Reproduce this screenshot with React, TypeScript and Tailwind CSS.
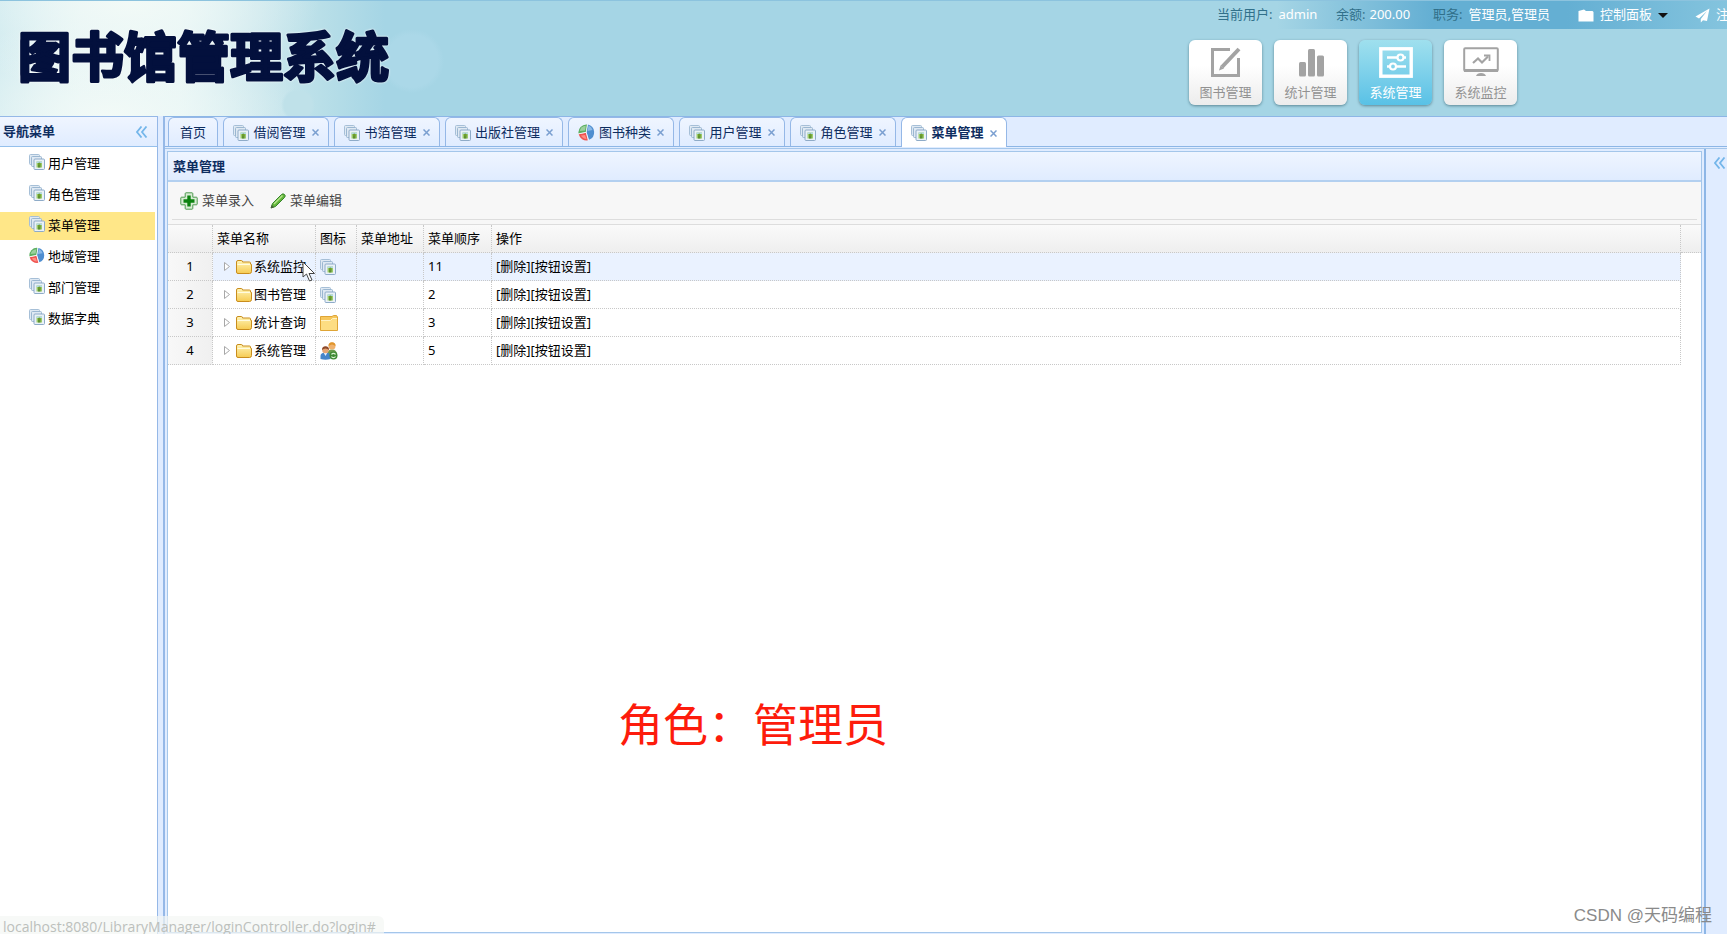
import React, { useState } from 'react'

type IconProps = { className?: string }

type IconType = (props: IconProps) => React.ReactElement

type Tab = {
	title: string
	icon?: IconType
	width: string
}

type MenuRow = {
	name: string
	icon: IconType
	url: string
	order: number
}

function IconPictures({ className = '' }: IconProps) {
	return (
		<svg viewBox="0 0 16 16" className={`size-4 shrink-0 ${className}`} aria-hidden="true">
			<rect x="0.5" y="0.5" width="10" height="10" rx="1" fill="#dfe9f3" stroke="#a6bfd7" />
			<rect x="2.5" y="2.5" width="10" height="10" rx="1" fill="#dfe9f3" stroke="#9bb7d1" />
			<rect x="5" y="5" width="10.5" height="10.5" rx="1" fill="#eaf1f8" stroke="#8eabc8" />
			<rect x="7.500" y="7.500" width="5.500" height="6" fill="#9ccb6a" />
			<rect x="7.500" y="7.500" width="5.500" height="1.500" fill="#b5d9ec" />
			<path d="M9 10.500h2.500v3H9z" fill="#5d8f35" />
			<circle cx="10.300" cy="10" r="1.500" fill="#6c9d2c" />
		</svg>
	)
}

function IconPie({ className = '' }: IconProps) {
	return (
		<svg viewBox="0 0 17 17" className={`size-[17px] shrink-0 ${className}`} aria-hidden="true">
			<path d="M8.500 8L9.800 0.500A8 8 0 0 1 11 15.800Z" fill="#4f8ed0" />
			<path d="M9.500 7L10.500 1.500A6.500 6.500 0 0 1 14.500 6Z" fill="#8bb9e6" />
			<path d="M8 8L0.500 9.500A8 8 0 0 1 9 0.400Z" fill="#5caf62" />
			<path d="M7 6.500L1.800 7A6.500 6.500 0 0 1 7.800 1.800Z" fill="#9bd09d" />
			<path d="M8 8.800L10 16.300A8 8 0 0 1 0.700 10.300Z" fill="#ef5350" />
			<path d="M7 11L8.500 15A6.500 6.500 0 0 1 3 11.500Z" fill="#ff8d84" />
			<path d="M0.500 9.800L8.200 8.300L10.300 16.300M8.200 8.300L9.500 0.500" fill="none" stroke="#fff" strokeWidth="0.600" />
		</svg>
	)
}

function IconFolder({ className = '' }: IconProps) {
	return (
		<svg viewBox="0 0 16 14" className={`h-[14px] w-4 shrink-0 ${className}`} aria-hidden="true">
			<defs>
				<linearGradient id="folder" x1="0" y1="0" x2="0" y2="1">
					<stop offset="0" stopColor="#fff5b8" />
					<stop offset="1" stopColor="#f6cb52" />
				</linearGradient>
			</defs>
			<path
				d="M0.500 12V2Q0.500 0.500 2 0.500H5.500Q6.500 0.500 6.500 2H13.500Q14.500 2 14.500 3V4H15Q15.500 4 15.500 5V11.500Q15.500 13.500 13.500 13.500H2Q0.500 13.500 0.500 12Z"
				fill="url(#folder)"
				stroke="#c98d1d"
			/>
			<path d="M1.500 4.500H14" stroke="#fffbe0" />
		</svg>
	)
}

function IconFolderLarge({ className = '' }: IconProps) {
	return (
		<svg viewBox="0 0 18 16" className={`h-4 w-[18px] shrink-0 ${className}`} aria-hidden="true">
			<path d="M0.500 1.500H12L13.500 0.500H16.500L17.500 2V15.500H0.500Z" fill="#f7c75b" stroke="#dfa536" />
			<path d="M1 5.500H10.500L12.500 3.500H17V15H1Z" fill="#fddd83" />
			<path d="M1 5.500H10.500L12.500 3.500H17" fill="none" stroke="#fff2c4" />
		</svg>
	)
}

function IconUsers({ className = '' }: IconProps) {
	return (
		<svg viewBox="0 0 18 18" className={`size-[18px] shrink-0 ${className}`} aria-hidden="true">
			<path d="M7 13Q7 7.500 12 7.500T17 13V16H7Z" fill="#6b9c4e" />
			<circle cx="12" cy="4" r="3.500" fill="#f0b26d" />
			<path d="M8.500 4Q8.500 0.300 12 0.300T15.500 4Q13.500 2.500 12 2.500T8.500 4Z" fill="#e0952c" />
			<path d="M0.500 17V14Q0.500 10.500 5.500 10.500T10.500 14V17Q5.500 18.500 0.500 17Z" fill="#4585c9" />
			<path d="M3.500 10.500L5.500 14L7.500 10.500Z" fill="#e8f1fb" />
			<circle cx="5.500" cy="8" r="3.300" fill="#e5a574" />
			<path d="M2 8Q2 4.300 5.500 4.300T9 8Q7.500 6.500 5.500 6.500T2 8Z" fill="#8e4a2c" />
			<circle cx="13.500" cy="13.500" r="4" fill="#3f8a35" />
			<path d="M11.500 12.500A2.300 2.300 0 0 1 15.500 12.500M15.500 14.500A2.300 2.300 0 0 1 11.500 14.500" fill="none" stroke="#d9f0cf" strokeWidth="1.300" />
		</svg>
	)
}

function IconAdd() {
	return (
		<svg viewBox="0 0 18 18" className="size-[18px] shrink-0" aria-hidden="true">
			<path
				d="M6 0.800H12Q12.800 0.800 12.800 1.600V5.200H16.400Q17.200 5.200 17.200 6V12Q17.200 12.800 16.400 12.800H12.800V16.400Q12.800 17.200 12 17.200H6Q5.200 17.200 5.200 16.400V12.800H1.600Q0.800 12.800 0.800 12V6Q0.800 5.200 1.600 5.200H5.200V1.600Q5.200 0.800 6 0.800Z"
				fill="#d8ecd4"
				stroke="#4f9a50"
			/>
			<path d="M7.300 3.500H10.700V7.300H14.500V10.700H10.700V14.500H7.300V10.700H3.500V7.300H7.300Z" fill="#0c8210" />
		</svg>
	)
}

function IconPencil() {
	return (
		<svg viewBox="0 0 16 16" className="size-4 shrink-0" aria-hidden="true">
			<path d="M1 15L2.500 10.500L11.500 1.500Q13 0.200 14.500 1.500T14.500 4.500L5.500 13.500Z" fill="#62b53a" stroke="#35842a" />
			<path d="M4 11L12.500 2.500" stroke="#b6e58c" strokeWidth="1.500" />
			<path d="M0.800 15.200L1.800 12L4 14.200Z" fill="#4a5a3e" />
		</svg>
	)
}

function IconCollapse() {
	return (
		<svg viewBox="0 0 12 12" className="size-3" aria-hidden="true">
			<path d="M5.500 0.500L1 6L5.500 11.500M10.500 0.500L6 6L10.500 11.500" fill="none" stroke="#74b6ea" strokeWidth="1.800" />
		</svg>
	)
}

function IconEdit() {
	return (
		<svg viewBox="0 0 34 32" className="h-8 w-[34px]" aria-hidden="true" fill="none" stroke="#a3a3a3">
			<path d="M21 3.500H3.500V29.500H29.500V12" strokeWidth="3" />
			<path d="M13 21L30 3" strokeWidth="4" />
			<path d="M10 24.500L11.500 19.500L15 22.500Z" fill="#a3a3a3" stroke="none" />
		</svg>
	)
}

function IconBars() {
	return (
		<svg viewBox="0 0 32 32" className="size-8" aria-hidden="true" fill="#a3a3a3">
			<rect x="4" y="16" width="7" height="14.500" rx="1.500" />
			<rect x="13" y="3" width="7" height="27.500" rx="1.500" />
			<rect x="22" y="9.500" width="7" height="21" rx="1.500" />
		</svg>
	)
}

function IconSettings() {
	return (
		<svg viewBox="0 0 34 32" className="h-8 w-[34px]" aria-hidden="true" fill="none" stroke="#fff">
			<rect x="1.800" y="2.800" width="30.400" height="27.400" strokeWidth="3.400" />
			<path d="M8 11.500H18M25 11.500H27M8 20.500H11M18 20.500H27" strokeWidth="2.400" />
			<circle cx="21.500" cy="11.500" r="3" strokeWidth="2.200" />
			<circle cx="14" cy="20.500" r="3" strokeWidth="2.200" />
		</svg>
	)
}

function IconMonitor() {
	return (
		<svg viewBox="0 0 36 32" className="h-8 w-9" aria-hidden="true" fill="none" stroke="#a3a3a3">
			<rect x="1.200" y="2.200" width="33.600" height="22.600" rx="1" strokeWidth="2" />
			<path d="M1 24.500H35" strokeWidth="3" />
			<path d="M10 17L15 12.500L19 16.500L25 10.500" strokeWidth="2.200" />
			<path d="M21 9.500H26.500V15" strokeWidth="1.800" />
			<path d="M13 30Q14 27 18 27T23 30Z" fill="#a3a3a3" stroke="none" />
		</svg>
	)
}

function Logo() {
	return (
		<svg
			viewBox="0 0 400 90"
			className="h-[90px] w-[400px] shrink-0 drop-shadow-[0_0_1px_#ffffff]"
			role="img"
			aria-label="图书馆管理系统"
		>
			<rect x="23" y="25" width="41" height="43" rx="5" fill="none" stroke="#03103d" strokeWidth="5" />
			<text
				x="18"
				y="66"
				fontSize="53"
				strokeWidth="3"
				strokeLinejoin="round"
				className="fill-[#03103d] stroke-[#03103d] font-['Noto_Sans_CJK_SC',sans-serif] font-bold"
			>
				图书馆管理系统
			</text>
		</svg>
	)
}

const shortcuts = [
	{ title: '图书管理', icon: IconEdit },
	{ title: '统计管理', icon: IconBars },
	{ title: '系统管理', icon: IconSettings },
	{ title: '系统监控', icon: IconMonitor }
]

const navigation: { title: string; icon: IconType }[] = [
	{ title: '用户管理', icon: IconPictures },
	{ title: '角色管理', icon: IconPictures },
	{ title: '菜单管理', icon: IconPictures },
	{ title: '地域管理', icon: IconPie },
	{ title: '部门管理', icon: IconPictures },
	{ title: '数据字典', icon: IconPictures }
]

const tabs: Tab[] = [
	{ title: '首页', width: 'w-[50px]' },
	{ title: '借阅管理', icon: IconPictures, width: 'w-[106px]' },
	{ title: '书箔管理', icon: IconPictures, width: 'w-[106px]' },
	{ title: '出版社管理', icon: IconPictures, width: 'w-[118px]' },
	{ title: '图书种类', icon: IconPie, width: 'w-[106px]' },
	{ title: '用户管理', icon: IconPictures, width: 'w-[106px]' },
	{ title: '角色管理', icon: IconPictures, width: 'w-[106px]' },
	{ title: '菜单管理', icon: IconPictures, width: 'w-[106px]' }
]

const rows: MenuRow[] = [
	{ name: '系统监控', icon: IconPictures, url: '', order: 11 },
	{ name: '图书管理', icon: IconPictures, url: '', order: 2 },
	{ name: '统计查询', icon: IconFolderLarge, url: '', order: 3 },
	{ name: '系统管理', icon: IconUsers, url: '', order: 5 }
]

function Header() {
	const [active, setActive] = useState('系统管理')

	return (
		<header className="flex h-[116px] shrink-0 items-start justify-between overflow-hidden border-t border-[#8cc3de] bg-[#a5d5e5] bg-[radial-gradient(circle_at_412px_60px,#abd8e8_0,#abd8e8_26px,transparent_32px),radial-gradient(circle_at_298px_104px,#bfe1e9_0,#bfe1e9_14px,transparent_17px),radial-gradient(ellipse_190px_100px_at_130px_0px,#f2faf7_0%,transparent_100%),radial-gradient(ellipse_200px_100px_at_110px_116px,#f2faf7_0%,transparent_100%),linear-gradient(90deg,#cde9ef_0px,#e0f2f4_80px,#e2f3f5_180px,#cde8ee_250px,#b9dfe8_320px,#a5d5e5_385px)]">
			<div className="pt-[10px]">
				<Logo />
			</div>
			<div className="w-[510px] shrink-0">
				<div className="flex h-7 items-center overflow-hidden bg-[linear-gradient(90deg,#a5d5e5_60px,#64afd3_215px,#64afd3_350px,#84c4de_100%)] text-[13px] whitespace-nowrap text-[#31708a]">
					<p className="flex w-[119px] shrink-0 gap-[6px]">
						当前用户: <span className="text-white">admin</span>
					</p>
					<p className="flex w-[97px] shrink-0 gap-1">
						余额: <span className="text-white">200.00</span>
					</p>
					<p className="flex w-[145px] shrink-0 gap-[6px]">
						职务: <span className="text-white">管理员,管理员</span>
					</p>
					<button className="flex w-[117px] shrink-0 items-center gap-[6px] text-white">
						<svg viewBox="0 0 16 13" className="h-[13px] w-4" aria-hidden="true">
							<path d="M0.500 2L6 0.500L8 2H14.500L15.500 3V12.500H0.500Z" fill="#fff" />
						</svg>
						控制面板
						<svg viewBox="0 0 10 5" className="h-[5px] w-[10px]" aria-hidden="true">
							<path d="M0 0H10L5 5Z" fill="#111" />
						</svg>
					</button>
					<button className="flex shrink-0 items-center gap-[6px] text-white">
						<svg viewBox="0 0 15 15" className="size-[15px]" aria-hidden="true">
							<path d="M14.500 0.500L0.500 8.500L4 10.500L12 3L5.800 11V14.500L8 12.300L12 13Z" fill="#fff" />
						</svg>
						注销
					</button>
				</div>
				<nav className="-ml-7 flex gap-3 pt-[11px]">
					{shortcuts.map(({ title, icon: Icon }) => (
						<button
							key={title}
							onClick={() => setActive(title)}
							className={`flex h-[65px] w-[73px] flex-col items-center rounded-md pt-[6px] text-[13px] leading-5 shadow-[0_1px_3px_#5b8795] ${
								title == active
									? 'bg-linear-to-b from-[#9fe0ee] to-[#58c1e6] text-white'
									: 'bg-linear-to-b from-white from-40% to-[#ececec] text-[#929292]'
							}`}
						>
							<Icon />
							<span className="pt-1">{title}</span>
						</button>
					))}
				</nav>
			</div>
		</header>
	)
}

function Sidebar() {
	const [selected, setSelected] = useState('菜单管理')

	return (
		<aside className="flex w-[158px] shrink-0 flex-col border-t border-r border-[#95b8e7] bg-white">
			<div className="flex h-[30px] items-center justify-between border-b border-[#95c0ec] bg-linear-to-b from-[#eff5ff] to-[#e0ecff] pr-[9px] pl-[3px]">
				<h2 className="text-[13px] font-bold text-[#0e2d5f]">导航菜单</h2>
				<button aria-label="收起导航">
					<IconCollapse />
				</button>
			</div>
			<ul className="flex flex-col gap-[3px] pt-[3px] pr-[2px]">
				{navigation.map(({ title, icon: Icon }) => (
					<li key={title}>
						<a
							href="#"
							onClick={() => setSelected(title)}
							className={`flex h-7 items-center gap-[3px] pb-px pl-[29px] text-[13px] ${
								title == selected ? 'bg-[#ffe788]' : ''
							}`}
						>
							<Icon className="mb-[3px] w-4" />
							{title}
						</a>
					</li>
				))}
			</ul>
		</aside>
	)
}

function TabStrip() {
	const [current, setCurrent] = useState(tabs.length - 1)

	return (
		<div className="flex h-[31px] shrink-0 items-end gap-[5px] border-y border-[#8db6e6] bg-[#e0ecff] pl-[3px]">
			{tabs.map(({ title, icon: Icon, width }, i) => {
				const look =
					i == current
						? '-mb-px h-[30px] bg-white font-bold'
						: 'h-[29px] bg-linear-to-b from-[#eff5ff] to-[#e0ecff]'
				return (
					<div
						key={i}
						className={`flex shrink-0 items-center justify-center gap-[6px] rounded-t-md border border-b-0 border-[#95b8e7] pt-px text-[13px] text-[#0e2d5f] ${width} ${look}`}
					>
						<button onClick={() => setCurrent(i)} className="flex items-center gap-1">
							{Icon && <Icon />}
							{title}
						</button>
						{Icon && (
							<button aria-label={`关闭${title}`}>
								<svg viewBox="0 0 7 7" className="size-[7px]" aria-hidden="true">
									<path d="M0.500 0.500L6.500 6.500M6.500 0.500L0.500 6.500" stroke="#7a9fd0" strokeWidth="1.500" />
								</svg>
							</button>
						)}
					</div>
				)
			})}
		</div>
	)
}

function MenuTable() {
	const th = 'border-r border-b border-dotted border-[#c8c8c8] px-1 pt-px text-left font-normal'
	const td = 'border-r border-b border-dotted border-[#c8c8c8] px-1'

	return (
		<table className="w-full table-fixed border-separate border-spacing-0 text-[13px] text-black">
			<colgroup>
				<col className="w-[45px]" />
				<col className="w-[103px]" />
				<col className="w-[41px]" />
				<col className="w-[67px]" />
				<col className="w-[68px]" />
				<col />
				<col className="w-5" />
			</colgroup>
			<thead>
				<tr className="h-7 bg-linear-to-b from-[#fafafa] to-[#eeeeee]">
					<th className={th} aria-label="序号"></th>
					<th className={th}>菜单名称</th>
					<th className={th}>图标</th>
					<th className={th}>菜单地址</th>
					<th className={th}>菜单顺序</th>
					<th className={th}>操作</th>
					<td className="border-b border-dotted border-[#c8c8c8]"></td>
				</tr>
			</thead>
			<tbody>
				{rows.map(({ name, icon: Icon, url, order }, i) => (
					<tr key={name} className={`h-7 ${i == 0 ? 'bg-[#eaf2ff]' : ''}`}>
						<td className={`${td} bg-linear-to-r from-[#f8f8f8] to-[#f0f0f0] text-center`}>{i + 1}</td>
						<td className={td}>
							<div className="flex items-center pl-[7px] whitespace-nowrap">
								<svg viewBox="0 0 6 9" className="mr-[6px] h-[9px] w-[6px]" aria-hidden="true">
									<path d="M0.500 0.500L5.500 4.500L0.500 8.500Z" fill="#fff" stroke="#a8a8a8" />
								</svg>
								<IconFolder className="mr-[2px]" />
								{name}
							</div>
						</td>
						<td className={td}>
							<Icon />
						</td>
						<td className={td}>{url}</td>
						<td className={td}>{order}</td>
						<td className={td}>
							<a href="#">[删除]</a>
							<a href="#">[按钮设置]</a>
						</td>
					</tr>
				))}
			</tbody>
		</table>
	)
}

function MenuPanel() {
	return (
		<section className="flex min-w-0 flex-1 flex-col border border-[#a4c6ea] bg-white">
			<h2 className="flex h-[30px] shrink-0 items-center border-b-2 border-[#b3d0f0] bg-linear-to-b from-[#eff5ff] to-[#e0ecff] pt-px pl-[5px] text-[13px] font-bold text-[#0e2d5f]">
				菜单管理
			</h2>
			<div className="h-[43px] shrink-0 border-b border-[#dddddd] bg-[#f7f7f7] px-1">
				<div className="flex h-[38px] items-center gap-4 border-b border-[#dddddd] pl-2 text-[13px] text-[#444]">
					<button className="flex items-center gap-1">
						<IconAdd />
						菜单录入
					</button>
					<button className="flex items-center gap-1">
						<IconPencil />
						菜单编辑
					</button>
				</div>
			</div>
			<MenuTable />
		</section>
	)
}

export default function App() {
	return (
		<div className="relative flex h-screen flex-col overflow-hidden bg-[#e0ecff] font-['Noto_Sans','Noto_Sans_CJK_SC',sans-serif]">
			<Header />
			<div className="flex min-h-0 flex-1">
				<Sidebar />
				<main className="ml-[5px] flex min-w-0 flex-1 flex-col border-l-2 border-[#95b8e7]">
					<TabStrip />
					<div className="mt-px flex min-h-0 flex-1 border-t border-[#a4c6ea]">
						<div className="flex min-w-0 flex-1 px-[2px] pt-[2px] pb-px">
							<MenuPanel />
						</div>
						<aside className="w-[23px] shrink-0 overflow-hidden border-l-2 border-[#8db6e6] pt-2 pl-2">
							<button aria-label="展开辅助区" className="flex">
								<IconCollapse />
							</button>
						</aside>
					</div>
				</main>
			</div>

			<p className="absolute top-[693px] left-[618px] text-[45px] leading-[64px] text-[#fd1c0c]">角色：管理员</p>
			<p className="absolute right-[15px] bottom-[6px] font-['Liberation_Sans','Noto_Sans_CJK_SC',sans-serif] text-[17px] leading-6 text-[#8a8a8a]">
				CSDN @天码编程
			</p>
			<p className="absolute bottom-0 left-0 h-[18px] rounded-tr-md bg-[#f4f6f3]/70 pt-1 pr-2 pl-[3px] font-['Open_Sans',sans-serif] text-sm leading-[14px] text-[#bcc0bc]">
				localhost:8080/LibraryManager/loginController.do?login#
			</p>
			<svg viewBox="0 0 14 21" className="absolute top-[261px] left-[302px] h-[21px] w-[14px]" aria-hidden="true">
				<path d="M1 1V16L4.500 13L7.500 20L10 19L7 12.500H12.500Z" fill="#fff" stroke="#444" />
			</svg>
		</div>
	)
}
